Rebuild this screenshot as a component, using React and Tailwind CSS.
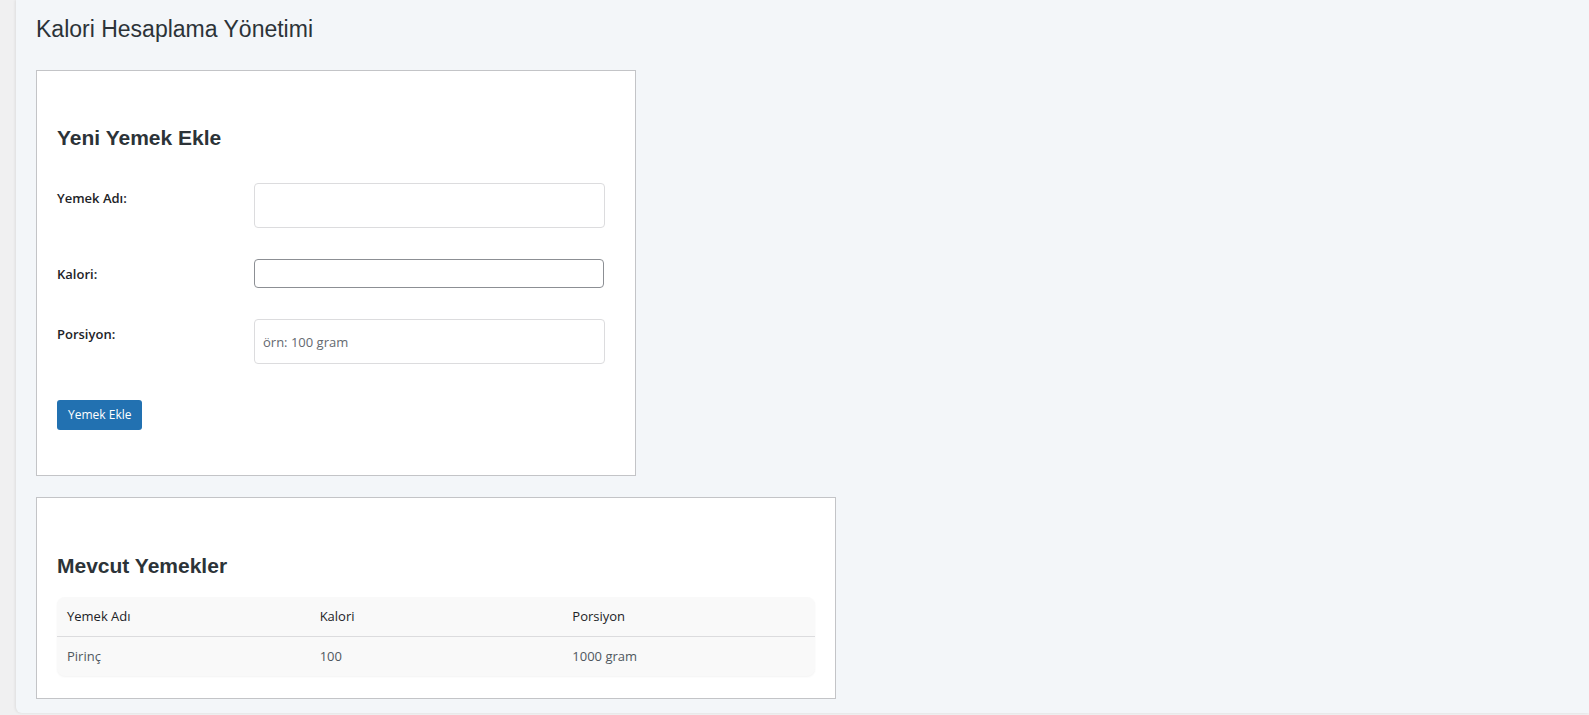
import { useState } from "react";

const foods = [{ name: "Pirinç", calories: "100", portion: "1000 gram" }];

export default function App() {
  const [name, setName] = useState("");
  const [calories, setCalories] = useState("");
  const [portion, setPortion] = useState("");

  return (
    <div className="flex min-h-screen bg-[#f0f0f1] font-['Open_Sans',sans-serif]">
      {/* admin menu gutter */}
      <div className="w-4 shrink-0" />

      <main className="h-[713px] flex-1 rounded-bl-[6px] bg-[#f3f6f9] pl-5 pt-[14px] shadow-[-1px_0_3px_rgba(0,0,0,0.08)]">
        <h1 className="font-['Liberation_Sans',Arial,sans-serif] text-[23px] leading-[30px] text-[#2c3338]">
          Kalori Hesaplama Yönetimi
        </h1>

        {/* Yeni yemek formu */}
        <section className="mt-[26px] w-[600px] border border-[#c3c4c7] bg-white px-5 pb-[45px] pt-[53px]">
          <h2 className="font-['Liberation_Sans',Arial,sans-serif] text-[21px] font-bold leading-[27px] text-[#2c3338]">
            Yeni Yemek Ekle
          </h2>

          <form onSubmit={(e) => e.preventDefault()} className="mt-[32px] flex flex-col">
            <div className="grid grid-cols-[197px_351px]">
              <label className="pt-[5px] text-[13px] font-semibold leading-[20px] text-[#1d2327]">Yemek Adı:</label>
              <input
                type="text"
                value={name}
                onChange={(e) => setName(e.target.value)}
                className="h-[45px] w-[351px] rounded-[4px] border border-[#dcdcde] bg-white px-2 text-[13px] text-[#2c3338] outline-none"
              />
            </div>

            <div className="mt-[31px] grid grid-cols-[197px_351px]">
              <label className="pt-[5px] text-[13px] font-semibold leading-[20px] text-[#1d2327]">Kalori:</label>
              <input
                type="number"
                value={calories}
                onChange={(e) => setCalories(e.target.value)}
                className="h-[29px] w-[350px] rounded-[4px] border border-[#8c8f94] bg-white px-2 text-[13px] text-[#2c3338] outline-none"
              />
            </div>

            <div className="mt-[31px] grid grid-cols-[197px_351px]">
              <label className="pt-[5px] text-[13px] font-semibold leading-[20px] text-[#1d2327]">Porsiyon:</label>
              <input
                type="text"
                value={portion}
                onChange={(e) => setPortion(e.target.value)}
                placeholder="örn: 100 gram"
                className="h-[45px] w-[351px] rounded-[4px] border border-[#dcdcde] bg-white px-2 text-[13px] text-[#2c3338] outline-none placeholder:text-[#646970]"
              />
            </div>

            <div className="mt-[36px]">
              <button
                type="submit"
                className="h-[30px] rounded-[3px] bg-[#2271b1] px-[11px] text-[12px] leading-[30px] text-white"
              >
                Yemek Ekle
              </button>
            </div>
          </form>
        </section>

        {/* Kayıtlı yemekler */}
        <section className="mt-[21px] w-[800px] border border-[#c3c4c7] bg-white px-5 pb-[22px] pt-[54px]">
          <h2 className="font-['Liberation_Sans',Arial,sans-serif] text-[21px] font-bold leading-[27px] text-[#2c3338]">
            Mevcut Yemekler
          </h2>

          <div className="mt-[18px] overflow-hidden rounded-lg bg-[#f9f9f9] shadow-[0_1px_2px_rgba(0,0,0,0.05)]">
            <table className="w-full border-collapse text-left text-[13px]">
              <thead>
                <tr className="border-b border-[#dcdcde]">
                  <th className="h-[39px] w-1/3 pl-[10px] font-normal text-[#1d2327]">Yemek Adı</th>
                  <th className="h-[39px] w-1/3 pl-[10px] font-normal text-[#1d2327]">Kalori</th>
                  <th className="h-[39px] w-1/3 pl-[10px] font-normal text-[#1d2327]">Porsiyon</th>
                </tr>
              </thead>
              <tbody>
                {foods.map((f) => (
                  <tr key={f.name}>
                    <td className="h-[40px] pl-[10px] text-[#50575e]">{f.name}</td>
                    <td className="h-[40px] pl-[10px] text-[#50575e]">{f.calories}</td>
                    <td className="h-[40px] pl-[10px] text-[#50575e]">{f.portion}</td>
                  </tr>
                ))}
              </tbody>
            </table>
          </div>
        </section>
      </main>
    </div>
  );
}
